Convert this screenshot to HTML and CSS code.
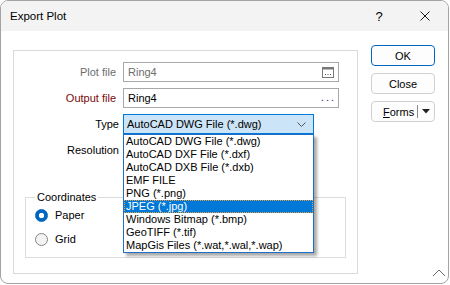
FILE: index.html
```html
<!DOCTYPE html>
<html>
<head>
<meta charset="utf-8">
<link rel="stylesheet" href="styles.css">
</head>
<body>
<div class="window">
  <div class="titlebar">
    <span class="title">Export Plot</span>
    <span class="tb-btn help">?</span>
    <span class="tb-btn close">
      <svg width="10" height="10" viewBox="0 0 10 10"><path d="M0.5 0.5 L9.5 9.5 M9.5 0.5 L0.5 9.5" stroke="#1a1a1a" stroke-width="1" fill="none"/></svg>
    </span>
  </div>
  <div class="body">
    <div class="panel">
      <div class="form">
        <label class="lbl disabled">Plot file</label>
        <div class="input disabled">
          <span>Ring4</span>
          <svg class="browse" width="12" height="11" viewBox="0 0 12 11"><rect x="0.5" y="0.5" width="11" height="10" fill="none" stroke="#7a7a7a"/><rect x="0.5" y="0.5" width="11" height="2" fill="#7a7a7a"/><rect x="3" y="7" width="1" height="1" fill="#555"/><rect x="5.5" y="7" width="1" height="1" fill="#555"/><rect x="8" y="7" width="1" height="1" fill="#555"/></svg>
        </div>
        <label class="lbl required">Output file</label>
        <div class="input">
          <span>Ring4</span>
          <span class="dots">...</span>
        </div>
        <label class="lbl tight">Type</label>
        <div class="combo-wrap">
          <div class="combo">
            <span>AutoCAD DWG File (*.dwg)</span>
            <svg class="chev" width="9" height="5" viewBox="0 0 9 5"><path d="M0.5 0.5 L4.5 4.5 L8.5 0.5" stroke="#555" fill="none"/></svg>
          </div>
          <ul class="dropdown">
            <li>AutoCAD DWG File (*.dwg)</li>
            <li>AutoCAD DXF File (*.dxf)</li>
            <li>AutoCAD DXB File (*.dxb)</li>
            <li>EMF FILE</li>
            <li>PNG (*.png)</li>
            <li class="sel">JPEG (*.jpg)</li>
            <li>Windows Bitmap (*.bmp)</li>
            <li>GeoTIFF (*.tif)</li>
            <li>MapGis Files (*.wat,*.wal,*.wap)</li>
          </ul>
        </div>
        <label class="lbl tight">Resolution</label>
        <div class="empty"></div>
      </div>
      <fieldset class="group">
        <legend>Coordinates</legend>
        <label class="radio"><span class="rdot on"></span>Paper</label>
        <label class="radio"><span class="rdot"></span>Grid</label>
      </fieldset>
    </div>
    <div class="buttons">
      <div class="btn primary">OK</div>
      <div class="btn">Close</div>
      <div class="btn split"><span class="split-label"><u>F</u>orms</span><span class="split-sep"></span><svg width="8" height="5" viewBox="0 0 8 5"><path d="M0 0 L8 0 L4 4.5 Z" fill="#222"/></svg></div>
    </div>
  </div>
  <svg class="caret" width="14" height="8" viewBox="0 0 14 8"><path d="M1 7 L7 1 L13 7" stroke="#6a6a6a" stroke-width="1" fill="none"/></svg>
</div>
</body>
</html>
```
FILE: styles.css
```css
* { box-sizing: border-box; }
html, body { margin: 0; padding: 0; background: #ffffff; }
body {
  width: 450px;
  height: 285px;
  overflow: hidden;
  font-family: "Liberation Sans", Arial, sans-serif;
  font-size: 11px;
  color: #000;
}
.window {
  position: relative;
  width: 449px;
  height: 284px;
  border: 1px solid #a3a3a3;
  border-radius: 8px;
  overflow: hidden;
  background: #fff;
  display: flex;
  flex-direction: column;
}
.titlebar {
  height: 30px;
  flex: none;
  background: #f3f3f3;
  display: flex;
  align-items: center;
  padding-left: 9px;
  font-size: 11.5px;
}
.title { flex: 1; }
.tb-btn {
  width: 46px;
  height: 30px;
  display: flex;
  align-items: center;
  justify-content: center;
  font-size: 13px;
}
.body {
  display: flex;
  align-items: flex-start;
  padding-left: 12px;
}
.panel {
  margin-top: 19px;
  width: 345px;
  height: 224px;
  border: 1px solid #dadada;
  padding-top: 11px;
}
.form {
  display: grid;
  grid-template-columns: 109px auto;
  grid-auto-rows: 20px;
  row-gap: 6px;
  align-items: center;
  justify-items: start;
}
.lbl {
  justify-self: end;
  padding-right: 7px;
  white-space: nowrap;
}
.lbl.tight { padding-right: 4px; }
.lbl.disabled { color: #6d6d6d; }
.lbl.required { color: #7a0a0a; }
.input {
  width: 216px;
  height: 20px;
  border: 1px solid #a8a8a8;
  display: flex;
  align-items: center;
  padding: 0 4px;
}
.input.disabled { color: #6d6d6d; }
.input .browse { margin-left: auto; margin-right: 0px; }
.input .dots {
  margin-left: auto;
  color: #2a2a6a;
  letter-spacing: 2px;
  margin-right: -2px;
  margin-top: -3px;
}
.combo-wrap {
  position: relative;
  width: 191px;
  height: 20px;
}
.combo {
  width: 191px;
  height: 20px;
  border: 1px solid #0078d7;
  background: #cce4f7;
  display: flex;
  align-items: center;
  padding: 0 4px 0 3px;
}
.combo .chev { margin-left: auto; margin-right: 3px; }
.dropdown {
  position: absolute;
  left: 0;
  top: 20px;
  width: 191px;
  margin: 0;
  padding: 0;
  list-style: none;
  background: #fff;
  border: 1px solid #1f6fc6;
  box-shadow: 3px 3px 3px rgba(0, 0, 0, 0.35);
  z-index: 5;
}
.dropdown li {
  height: 13px;
  line-height: 13px;
  padding-left: 2px;
  white-space: nowrap;
}
.dropdown li.sel {
  background: #0078d7;
  color: #fff;
  outline: 1px dotted #e8a040;
  outline-offset: -1px;
}
.group {
  margin: 30px 11px 0;
  padding: 0 9px 10px;
  border: 1px solid #dcdcdc;
}
.group legend {
  padding: 0 2px;
  line-height: 14px;
}
.radio {
  display: flex;
  align-items: center;
  height: 16px;
  gap: 7px;
  margin-top: 3px;
}
.radio + .radio { margin-top: 8px; }
.rdot {
  width: 13px;
  height: 13px;
  border-radius: 50%;
  border: 1px solid #868686;
  background: #f3f3f3;
}
.rdot.on {
  border-color: #0067c0;
  background: radial-gradient(circle, #fff 0 2.5px, #0067c0 3px);
}
.buttons {
  margin-left: 13px;
  margin-top: 14px;
  display: flex;
  flex-direction: column;
  gap: 7px;
}
.btn {
  width: 64px;
  height: 21px;
  border: 1px solid #d0d0d0;
  border-radius: 4px;
  background: #fdfdfd;
  display: flex;
  align-items: center;
  justify-content: center;
}
.btn.primary { border-color: #0067c0; }
.btn.split { justify-content: flex-start; padding-left: 11px; }
.split-sep {
  width: 1px;
  height: 13px;
  background: #8a8a8a;
  margin: 0 4px 0 3px;
}
.caret {
  position: absolute;
  right: 2px;
  bottom: 6px;
}
```
